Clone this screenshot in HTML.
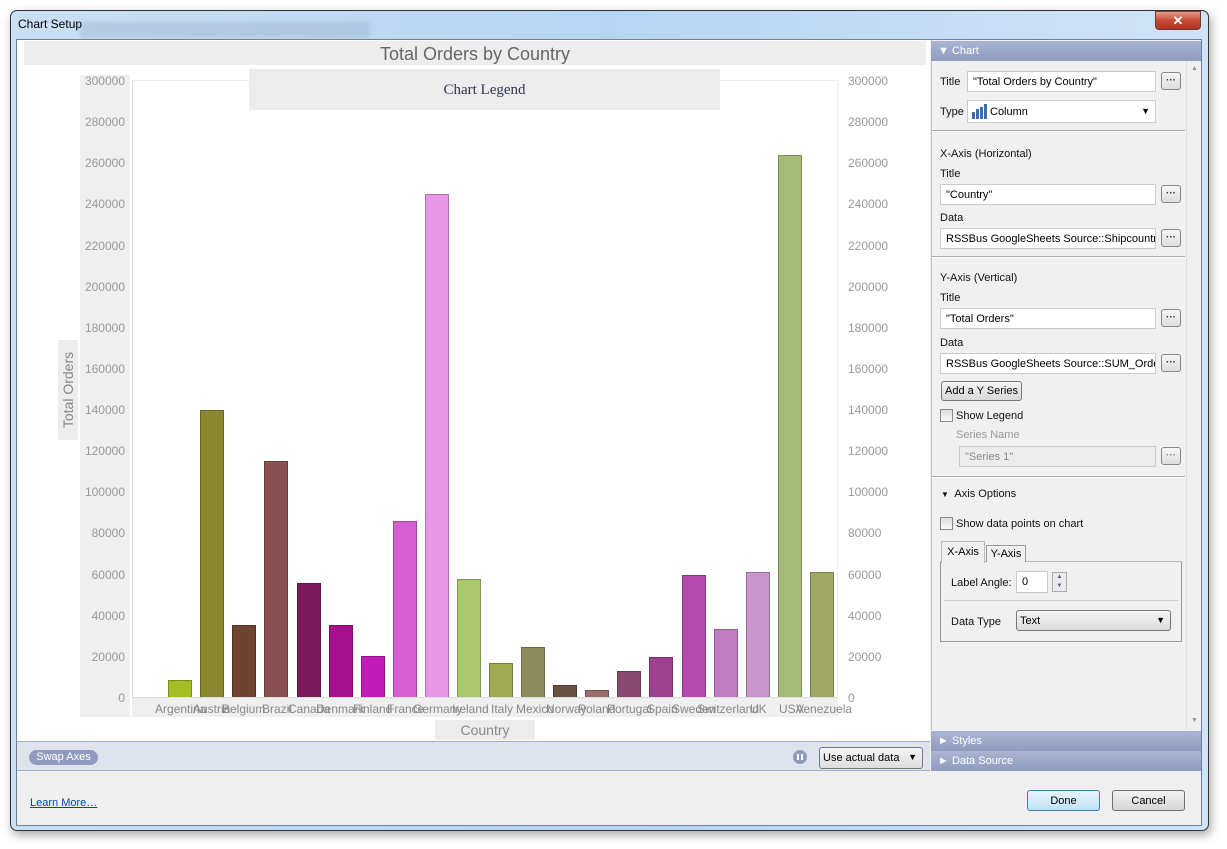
<!DOCTYPE html>
<html><head><meta charset="utf-8"><style>
*{box-sizing:border-box;margin:0;padding:0}
body{width:1227px;height:849px;background:#fff;position:relative;overflow:hidden;font-family:"Liberation Sans",Tahoma,sans-serif;font-size:12px;color:#000}
.a{position:absolute}
.win{left:10px;top:10px;width:1199px;height:821px;border:1px solid #333;border-radius:7px;background:linear-gradient(90deg,#c9dff3,#b7d5f3 50%,#cfe3f7);box-shadow:2px 4px 10px rgba(0,0,0,.35)}
.yl{position:absolute;width:60px;text-align:right;font-size:12px;color:#999;line-height:14px}
.yr{position:absolute;left:848px;font-size:12px;color:#999;line-height:14px}
.bar{position:absolute;width:24px;border:1px solid rgba(0,0,0,.25);border-bottom:none}
.xl{position:absolute;top:702px;font-size:12px;color:#888;white-space:nowrap}
.inp{position:absolute;background:#fff;border:1px solid #c9c9c9;height:21px;font-size:11px;padding:4px 5px 0;white-space:nowrap;overflow:hidden}
.dots{position:absolute;width:20px;height:18px;border:1px solid #888;border-radius:3px;background:linear-gradient(#f6f6f6,#ddd);font-size:10px;text-align:center;line-height:16px;font-weight:bold;color:#333}
.lbl{position:absolute;font-size:11px;color:#111}
.sep{position:absolute;left:932px;width:253px;height:2px;border-top:1px solid #aaa;border-bottom:1px solid #fff}
.hdr{position:absolute;left:931px;width:270px;height:20px;background:linear-gradient(#aab5d2,#8e9bbd);color:#fff;font-size:11px;padding:4px 0 0 7px}
.cb{position:absolute;width:13px;height:13px;border:1px solid #888;background:linear-gradient(#ddd,#fafafa)}
</style></head><body>
<div class="a win"></div>
<div class="a" style="left:80px;top:22px;width:290px;height:16px;background:rgba(140,160,190,.3);filter:blur(2px)"></div>
<div class="a" style="left:18px;top:17px;font-size:12px">Chart Setup</div>
<div class="a" style="left:1155px;top:11px;width:46px;height:19px;border:1px solid #6d3a35;border-radius:0 0 4px 4px;background:linear-gradient(#e89a8a,#c74a36 50%,#b13322);color:#fff;text-align:center;font-weight:bold;font-size:13px;line-height:17px">✕</div>
<div class="a" style="left:16px;top:39px;width:1186px;height:787px;background:#efefef;border:1px solid #6f7f99"></div>
<div class="a" style="left:17px;top:40px;width:913px;height:701px;background:#fff"></div>
<div class="a" style="left:24px;top:41px;width:902px;height:24px;background:#ededed;text-align:center;font-size:18px;color:#666;line-height:26px">Total Orders by Country</div>
<div class="a" style="left:80px;top:75px;width:50px;height:642px;background:#efefef"></div>
<div class="a" style="left:132px;top:80px;width:706px;height:618px;border-left:1px solid #ddd;border-top:1px solid #eee;border-right:1px solid #eee;border-bottom:1px solid #ddd"></div>
<div class="a" style="left:132px;top:698px;width:706px;height:19px;background:#efefef"></div>
<div class="a" style="left:249px;top:69px;width:471px;height:41px;background:#ececec;text-align:center;font-family:'Liberation Serif',serif;font-size:15px;color:#335;line-height:43px">Chart Legend</div>
<div class="a" style="left:58px;top:340px;width:20px;height:100px;background:#ececec"></div>
<div class="a" style="left:18px;top:382px;width:100px;height:16px;transform:rotate(-90deg);text-align:center;font-size:14px;color:#888">Total Orders</div>
<div class="a" style="left:435px;top:720px;width:100px;height:20px;background:#ececec;text-align:center;font-size:14px;color:#888;line-height:20px">Country</div>
<div class="yl" style="left:65px;top:74px">300000</div><div class="yr" style="top:74px">300000</div>
<div class="yl" style="left:65px;top:115px">280000</div><div class="yr" style="top:115px">280000</div>
<div class="yl" style="left:65px;top:156px">260000</div><div class="yr" style="top:156px">260000</div>
<div class="yl" style="left:65px;top:197px">240000</div><div class="yr" style="top:197px">240000</div>
<div class="yl" style="left:65px;top:239px">220000</div><div class="yr" style="top:239px">220000</div>
<div class="yl" style="left:65px;top:280px">200000</div><div class="yr" style="top:280px">200000</div>
<div class="yl" style="left:65px;top:321px">180000</div><div class="yr" style="top:321px">180000</div>
<div class="yl" style="left:65px;top:362px">160000</div><div class="yr" style="top:362px">160000</div>
<div class="yl" style="left:65px;top:403px">140000</div><div class="yr" style="top:403px">140000</div>
<div class="yl" style="left:65px;top:444px">120000</div><div class="yr" style="top:444px">120000</div>
<div class="yl" style="left:65px;top:485px">100000</div><div class="yr" style="top:485px">100000</div>
<div class="yl" style="left:65px;top:526px">80000</div><div class="yr" style="top:526px">80000</div>
<div class="yl" style="left:65px;top:568px">60000</div><div class="yr" style="top:568px">60000</div>
<div class="yl" style="left:65px;top:609px">40000</div><div class="yr" style="top:609px">40000</div>
<div class="yl" style="left:65px;top:650px">20000</div><div class="yr" style="top:650px">20000</div>
<div class="yl" style="left:65px;top:691px">0</div><div class="yr" style="top:691px">0</div>
<div class="bar" style="left:168px;top:680px;height:17px;background:#a4bd26"></div>
<div class="bar" style="left:200px;top:410px;height:287px;background:#888830"></div>
<div class="bar" style="left:232px;top:625px;height:72px;background:#6e4430"></div>
<div class="bar" style="left:264px;top:461px;height:236px;background:#8a5050"></div>
<div class="bar" style="left:297px;top:583px;height:114px;background:#7c1a5c"></div>
<div class="bar" style="left:329px;top:625px;height:72px;background:#a4108e"></div>
<div class="bar" style="left:361px;top:656px;height:41px;background:#c01cb8"></div>
<div class="bar" style="left:393px;top:521px;height:176px;background:#d65ed0"></div>
<div class="bar" style="left:425px;top:194px;height:503px;background:#e896e8"></div>
<div class="bar" style="left:457px;top:579px;height:118px;background:#a8c86a"></div>
<div class="bar" style="left:489px;top:663px;height:34px;background:#a0aa50"></div>
<div class="bar" style="left:521px;top:647px;height:50px;background:#8c8c5a"></div>
<div class="bar" style="left:553px;top:685px;height:12px;background:#6a5040"></div>
<div class="bar" style="left:585px;top:690px;height:7px;background:#9a6c6c"></div>
<div class="bar" style="left:617px;top:671px;height:26px;background:#8a4a70"></div>
<div class="bar" style="left:649px;top:657px;height:40px;background:#a04090"></div>
<div class="bar" style="left:682px;top:575px;height:122px;background:#b44aae"></div>
<div class="bar" style="left:714px;top:629px;height:68px;background:#c07cc0"></div>
<div class="bar" style="left:746px;top:572px;height:125px;background:#c896cc"></div>
<div class="bar" style="left:778px;top:155px;height:542px;background:#a4bc78"></div>
<div class="bar" style="left:810px;top:572px;height:125px;background:#a0a868"></div>
<div class="xl" style="left:155px">Argentina</div>
<div class="xl" style="left:193px">Austria</div>
<div class="xl" style="left:222px">Belgium</div>
<div class="xl" style="left:262px">Brazil</div>
<div class="xl" style="left:288px">Canada</div>
<div class="xl" style="left:316px">Denmark</div>
<div class="xl" style="left:353px">Finland</div>
<div class="xl" style="left:387px">France</div>
<div class="xl" style="left:413px">Germany</div>
<div class="xl" style="left:452px">Ireland</div>
<div class="xl" style="left:491px">Italy</div>
<div class="xl" style="left:516px">Mexico</div>
<div class="xl" style="left:546px">Norway</div>
<div class="xl" style="left:578px">Poland</div>
<div class="xl" style="left:607px">Portugal</div>
<div class="xl" style="left:647px">Spain</div>
<div class="xl" style="left:672px">Sweden</div>
<div class="xl" style="left:697px">Switzerland</div>
<div class="xl" style="left:750px">UK</div>
<div class="xl" style="left:779px">USA</div>
<div class="xl" style="left:796px">Venezuela</div>
<div class="a" style="left:17px;top:741px;width:913px;height:30px;background:#dfe3eb;border-top:1px solid #9eb0cf;border-bottom:1px solid #9eb0cf"></div>
<div class="a" style="left:29px;top:750px;width:69px;height:15px;border-radius:8px;background:#8f9cc0;color:#fff;font-size:11px;text-align:center;line-height:15px">Swap Axes</div>
<div class="a" style="left:793px;top:750px;width:14px;height:14px;border-radius:7px;background:#8f9cc0"><div class="a" style="left:4px;top:4px;width:2px;height:6px;background:#fff"></div><div class="a" style="left:8px;top:4px;width:2px;height:6px;background:#fff"></div></div>
<div class="a" style="left:819px;top:747px;width:104px;height:22px;border:1px solid #777;border-radius:3px;background:linear-gradient(#f4f4f4,#dedede);font-size:11px;padding:4px 3px 0">Use actual data<span style="position:absolute;right:5px;top:4px;font-size:9px">▼</span></div>
<div class="a" style="left:30px;top:797px;font-size:11px;color:#0645ad;text-decoration:underline">Learn More…</div>
<div class="a" style="left:1027px;top:790px;width:73px;height:21px;border:1px solid #3c7fb1;border-radius:3px;background:linear-gradient(#e8f5fd,#bfe2f7);text-align:center;font-size:11px;line-height:21px">Done</div>
<div class="a" style="left:1112px;top:790px;width:73px;height:21px;border:1px solid #707070;border-radius:3px;background:linear-gradient(#f2f2f2,#d6d6d6);text-align:center;font-size:11px;line-height:21px">Cancel</div>
<div class="a" style="left:931px;top:40px;width:270px;height:690px;background:#f0f0f0;border-left:1px solid #c0c0c0"></div>
<div class="a" style="left:1186px;top:60px;width:15px;height:670px;background:#f0f0f0;border-left:1px solid #e0e0e0"></div>
<div class="a" style="left:1191px;top:65px;font-size:7px;color:#999">▲</div>
<div class="a" style="left:1191px;top:717px;font-size:7px;color:#999">▼</div>
<div class="hdr" style="top:41px">▼ Chart</div>
<div class="lbl" style="left:940px;top:76px">Title</div>
<div class="inp" style="left:967px;top:71px;width:189px">"Total Orders by Country"</div>
<div class="dots" style="left:1161px;top:72px">···</div>
<div class="lbl" style="left:940px;top:106px">Type</div>
<div class="inp" style="left:967px;top:100px;width:189px;height:23px;padding:5px 0 0 22px">Column<span style="position:absolute;right:5px;top:5px;font-size:9px">▼</span>
<svg style="position:absolute;left:3px;top:3px" width="16" height="15"><rect x="1" y="8" width="3" height="7" fill="#3b6ea8"/><rect x="5" y="5" width="3" height="10" fill="#3b6ea8"/><rect x="9" y="3" width="3" height="12" fill="#3b6ea8"/><rect x="13" y="0" width="3" height="15" fill="#3b6ea8"/></svg></div>
<div class="sep" style="top:130px"></div>
<div class="lbl" style="left:940px;top:148px">X-Axis (Horizontal)</div>
<div class="lbl" style="left:940px;top:168px">Title</div>
<div class="inp" style="left:940px;top:184px;width:216px">"Country"</div>
<div class="dots" style="left:1161px;top:185px">···</div>
<div class="lbl" style="left:940px;top:212px">Data</div>
<div class="inp" style="left:940px;top:228px;width:216px">RSSBus GoogleSheets Source::Shipcountry</div>
<div class="dots" style="left:1161px;top:229px">···</div>
<div class="sep" style="top:256px"></div>
<div class="lbl" style="left:940px;top:272px">Y-Axis (Vertical)</div>
<div class="lbl" style="left:940px;top:292px">Title</div>
<div class="inp" style="left:940px;top:308px;width:216px">"Total Orders"</div>
<div class="dots" style="left:1161px;top:309px">···</div>
<div class="lbl" style="left:940px;top:337px">Data</div>
<div class="inp" style="left:940px;top:353px;width:216px">RSSBus GoogleSheets Source::SUM_Orderp</div>
<div class="dots" style="left:1161px;top:354px">···</div>
<div class="a" style="left:941px;top:381px;width:81px;height:20px;border:1px solid #777;border-radius:3px;background:linear-gradient(#f4f4f4,#d8d8d8);font-size:11px;text-align:center;line-height:19px">Add a Y Series</div>
<div class="cb" style="left:940px;top:409px"></div>
<div class="lbl" style="left:956px;top:410px">Show Legend</div>
<div class="lbl" style="left:956px;top:429px;color:#999">Series Name</div>
<div class="inp" style="left:959px;top:446px;width:197px;background:#ececec;color:#888">"Series 1"</div>
<div class="dots" style="left:1161px;top:447px;color:#888">···</div>
<div class="sep" style="top:476px"></div>
<div class="lbl" style="left:941px;top:488px"><span style="font-size:8px">▼</span>&nbsp; Axis Options</div>
<div class="cb" style="left:940px;top:517px"></div>
<div class="lbl" style="left:956px;top:518px">Show data points on chart</div>
<div class="a" style="left:940px;top:561px;width:242px;height:81px;border:1px solid #999;border-top:1px solid #bbb;background:#f0f0f0"></div>
<div class="a" style="left:941px;top:541px;width:44px;height:22px;background:#f0f0f0;border:1px solid #bbb;border-bottom:none;font-size:11px;text-align:center;padding-top:4px">X-Axis</div>
<div class="a" style="left:986px;top:545px;width:40px;height:17px;background:#f0f0f0;border:1px solid #999;border-bottom:none;font-size:11px;text-align:center;padding-top:2px">Y-Axis</div>
<div class="lbl" style="left:951px;top:577px">Label Angle:</div>
<div class="inp" style="left:1016px;top:571px;width:32px;height:22px">0</div>
<div class="a" style="left:1052px;top:572px;width:15px;height:20px;border:1px solid #aaa;background:#e8eaf0;font-size:6px;color:#557;text-align:center;line-height:9px">▲<br>▼</div>
<div class="a" style="left:944px;top:600px;width:234px;height:1px;background:#ccc"></div>
<div class="lbl" style="left:951px;top:616px">Data Type</div>
<div class="a" style="left:1016px;top:610px;width:155px;height:21px;border:1px solid #777;border-radius:3px;background:linear-gradient(#f4f4f4,#dcdcdc);font-size:11px;padding:4px 3px 0">Text<span style="position:absolute;right:5px;top:4px;font-size:9px">▼</span></div>
<div class="hdr" style="top:731px">► Styles</div>
<div class="hdr" style="top:751px">► Data Source</div>
</body></html>
